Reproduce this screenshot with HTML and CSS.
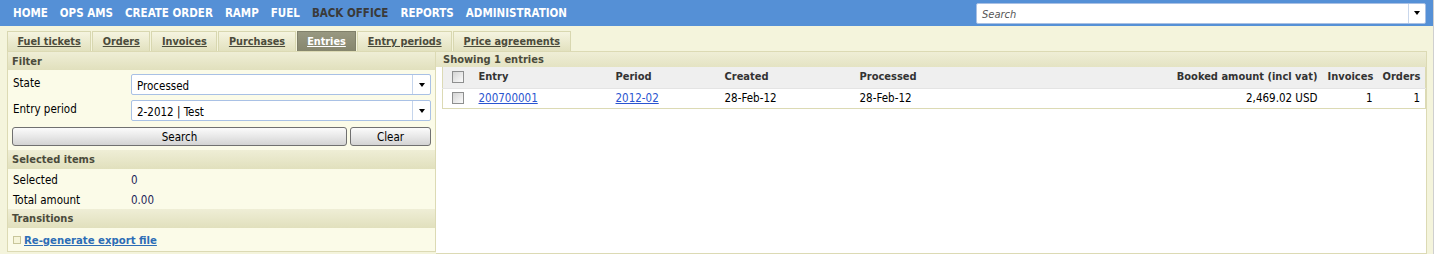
FILE: index.html
```html
<!DOCTYPE html>
<html lang="en">
<head>
<meta charset="utf-8">
<title>Entries</title>
<link rel="stylesheet" href="styles.css">
</head>
<body>
<div class="page">
  <header class="topnav">
    <nav class="menu">
      <a href="#">HOME</a>
      <a href="#">OPS AMS</a>
      <a href="#">CREATE ORDER</a>
      <a href="#">RAMP</a>
      <a href="#">FUEL</a>
      <a href="#" class="active">BACK OFFICE</a>
      <a href="#">REPORTS</a>
      <a href="#">ADMINISTRATION</a>
    </nav>
    <div class="search">
      <span class="search-text">Search</span>
      <span class="search-btn"><i class="caret"></i></span>
    </div>
  </header>

  <div class="tabs">
    <a href="#" class="tab">Fuel tickets</a>
    <a href="#" class="tab">Orders</a>
    <a href="#" class="tab">Invoices</a>
    <a href="#" class="tab">Purchases</a>
    <a href="#" class="tab active">Entries</a>
    <a href="#" class="tab">Entry periods</a>
    <a href="#" class="tab">Price agreements</a>
  </div>

  <div class="main">
    <aside class="side">
      <div class="sec-head">Filter</div>
      <div class="form">
        <div class="field">
          <label class="field-label">State</label>
          <div class="select"><span class="select-text">Processed</span><span class="sel-btn"><i class="caret"></i></span></div>
        </div>
        <div class="field">
          <label class="field-label">Entry period</label>
          <div class="select"><span class="select-text">2-2012 | Test</span><span class="sel-btn"><i class="caret"></i></span></div>
        </div>
        <div class="buttons">
          <button class="btn btn-search">Search</button>
          <button class="btn btn-clear">Clear</button>
        </div>
      </div>
      <div class="sec-head tall">Selected items</div>
      <div class="kv"><span class="kv-label">Selected</span><span class="kv-val">0</span></div>
      <div class="kv"><span class="kv-label">Total amount</span><span class="kv-val">0.00</span></div>
      <div class="sec-head tall">Transitions</div>
      <div class="action"><span class="bullet"></span><a href="#" class="action-link">Re-generate export file</a></div>
    </aside>

    <section class="results">
      <div class="res-head">Showing 1 entries</div>
      <table class="grid">
        <colgroup>
          <col class="c-cb"><col class="c-entry"><col class="c-period"><col class="c-created"><col><col class="c-amount"><col class="c-inv"><col class="c-ord">
        </colgroup>
        <thead>
          <tr>
            <th class="cb-cell"><span class="cb"></span></th>
            <th>Entry</th>
            <th>Period</th>
            <th>Created</th>
            <th>Processed</th>
            <th class="num">Booked amount (incl vat)</th>
            <th class="num">Invoices</th>
            <th class="num">Orders</th>
          </tr>
        </thead>
        <tbody>
          <tr>
            <td class="cb-cell"><span class="cb"></span></td>
            <td><a href="#" class="cell-link">200700001</a></td>
            <td><a href="#" class="cell-link">2012-02</a></td>
            <td>28-Feb-12</td>
            <td>28-Feb-12</td>
            <td class="num">2,469.02 USD</td>
            <td class="num">1</td>
            <td class="num">1</td>
          </tr>
        </tbody>
      </table>
    </section>
  </div>
</div>
</body>
</html>
```

FILE: styles.css
```css
* { box-sizing: border-box; }

body {
  margin: 0;
  background: #f4f4dc;
  font-family: "DejaVu Sans Condensed", "DejaVu Sans", sans-serif;
  font-stretch: condensed;
  font-size: 11.5px;
  color: #000;
}

.page {
  width: 1434px;
  height: 254px;
  border-right: 1px solid #cfcfcf;
  overflow: hidden;
}

/* top navigation */
.topnav {
  display: flex;
  align-items: center;
  height: 26px;
  background: #5590d6;
  padding: 0 7px 0 7px;
}
.menu { display: flex; }
.menu a {
  padding: 0 6px;
  color: #fff;
  font-weight: bold;
  font-size: 11.5px;
  line-height: 26px;
  text-decoration: none;
}
.menu a.active { color: #3a3a3a; }

.search {
  margin-left: auto;
  width: 450px;
  height: 21px;
  display: flex;
  background: #fff;
  border: 1px solid #a8c0e4;
  border-radius: 2px;
}
.search-text {
  flex: 1;
  padding: 2px 0 0 5px;
  font-style: italic;
  font-size: 11px;
  color: #555;
  line-height: 17px;
}
.search-btn {
  width: 17px;
  border-left: 1px solid #c9d7ec;
  display: flex;
  align-items: center;
  justify-content: center;
}
.caret {
  display: block;
  width: 0;
  height: 0;
  border-left: 3.5px solid transparent;
  border-right: 3.5px solid transparent;
  border-top: 4px solid #000;
}

/* tabs */
.tabs {
  display: flex;
  gap: 1px;
  height: 25px;
  padding: 5px 0 0 7px;
}
.tab {
  height: 20px;
  line-height: 19px;
  padding: 0 9.5px;
  border: 1px solid #d8d7b0;
  border-bottom: 0;
  background: linear-gradient(#f5f4e0, #e2e1bf);
  color: #4b4b3b;
  font-weight: bold;
  font-size: 10.8px;
  text-decoration: underline;
}
.tab.active {
  background: linear-gradient(#989881, #86866d);
  border-color: #80806a;
  color: #fff;
}

/* main area */
.main {
  display: flex;
  height: 203px;
  padding: 0 6px 0 7px;
}

.side {
  width: 429px;
  height: 201px;
  border: 1px solid #dcdab4;
  background: #fbfbe8;
  display: flex;
  flex-direction: column;
}
.sec-head {
  height: 18px;
  padding: 1px 0 0 4px;
  line-height: 18px;
  background: linear-gradient(#efeed6, #e1e0bd);
  font-weight: bold;
  font-size: 11px;
  color: #4b4b3b;
}
.sec-head.tall { height: 19px; }

.form {
  display: flex;
  flex-direction: column;
  gap: 5px;
  padding: 4px 4px 4px 0;
}
.field {
  display: flex;
  align-items: flex-start;
}
.field-label {
  width: 123px;
  padding: 1px 0 0 5px;
  line-height: 16px;
}
.select {
  flex: 1;
  height: 21px;
  display: flex;
  background: #fff;
  border: 1px solid #a9c1e5;
  border-radius: 2px;
}
.select-text {
  flex: 1;
  padding: 3px 0 0 5px;
  line-height: 17px;
}
.sel-btn {
  width: 18px;
  border-left: 1px solid #c5d5ec;
  display: flex;
  align-items: center;
  justify-content: center;
}
.buttons {
  display: flex;
  gap: 3px;
  padding-left: 4px;
  margin-top: 1px;
}
.btn {
  height: 19px;
  padding: 1px 0 0;
  border: 1px solid #707070;
  border-radius: 3px;
  background: linear-gradient(#fbfbfb, #e8e8e8 50%, #d3d3d3);
  font: inherit;
  color: #000;
}
.btn-search { flex: 1; }
.btn-clear { width: 81px; }

.kv {
  display: flex;
  height: 20px;
  padding-top: 3px;
  line-height: 17px;
}
.kv-label {
  width: 123px;
  padding-left: 5px;
}
.kv-val { color: #1e1e58; }

.action {
  flex: 1;
  display: flex;
  align-items: center;
  gap: 3px;
  padding: 1px 0 0 5px;
}
.bullet {
  width: 8px;
  height: 8px;
  border: 1px solid #c8c69a;
  background: #f6f5d8;
}
.action-link {
  color: #2c6db6;
  font-weight: bold;
  font-size: 11.25px;
  text-decoration: underline;
}

/* results */
.results {
  flex: 1;
  height: 203px;
  border: 1px solid #dcdab4;
  border-left: 0;
  background: #fff;
}
.res-head {
  height: 15px;
  line-height: 15px;
  padding-left: 7px;
  background: linear-gradient(#efeed6, #e4e3c3);
  font-weight: bold;
  font-size: 11px;
  color: #4b4b3b;
}
.grid {
  margin-left: 6px;
  width: calc(100% - 6px);
  border-collapse: collapse;
  table-layout: fixed;
  border: 1px solid #dcdab4;
  border-top: 0;
}
.c-cb { width: 31px; }
.c-entry { width: 137px; }
.c-period { width: 109px; }
.c-created { width: 135px; }
.c-amount { width: 160px; }
.c-inv { width: 55px; }
.c-ord { width: 48px; }

.grid th {
  height: 21px;
  padding: 0 5px 2px;
  background: #efefef;
  border-bottom: 1px solid #e4e4e4;
  text-align: left;
  font-weight: bold;
  font-size: 11px;
  color: #333;
  white-space: nowrap;
}
.grid td {
  height: 20px;
  padding: 0 5px 1px;
  white-space: nowrap;
}
.grid .num { text-align: right; }
.grid .cb-cell { padding: 0; }
.cb {
  display: block;
  width: 12px;
  height: 12px;
  margin: 0 auto;
  border: 1px solid #8e8f8f;
  background: linear-gradient(135deg, #d4d4d4, #fbfbfb);
}
.cell-link {
  color: #2a55d0;
  text-decoration: underline;
}
```
